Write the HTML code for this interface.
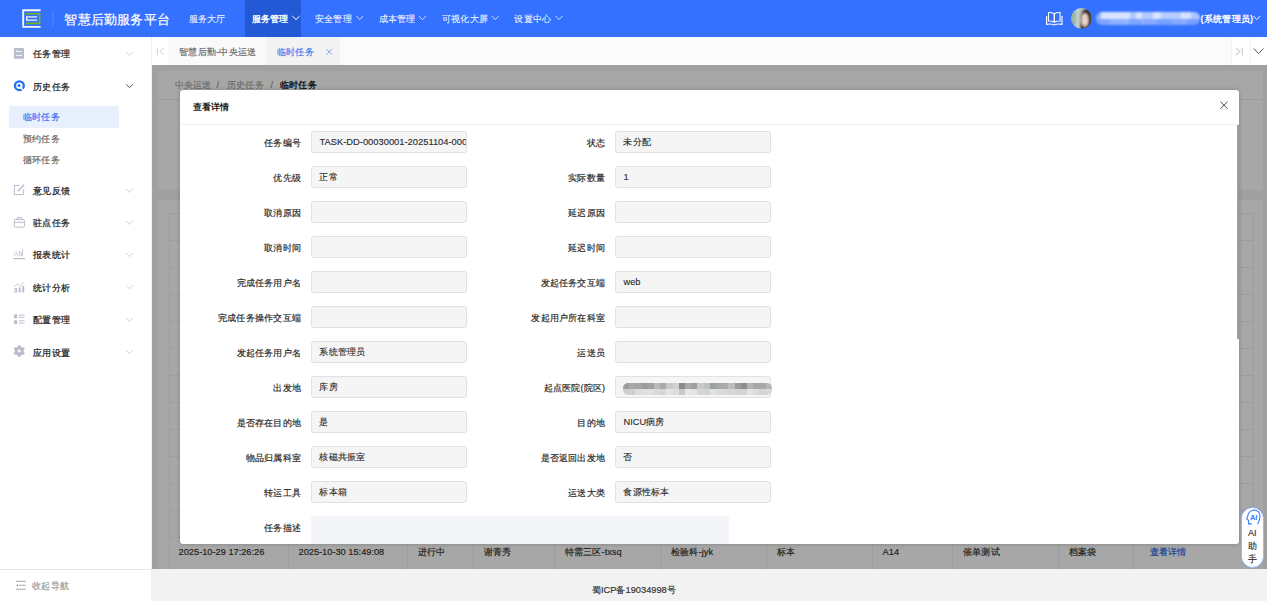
<!DOCTYPE html>
<html><head><meta charset="utf-8">
<style>
*{box-sizing:border-box;margin:0;padding:0}
html,body{width:1267px;height:601px;overflow:hidden;background:#fff;font-family:"Liberation Sans",sans-serif;color:#333}
.a{position:absolute;white-space:nowrap}
.t{font-size:9.24px;line-height:12px;letter-spacing:0.24px;-webkit-text-stroke:0.18px currentColor}
#hdr{position:absolute;left:0;top:0;width:1267px;height:37px;background:#3471ff}
#side{position:absolute;left:0;top:37px;width:152px;height:564px;background:#fff;border-right:0.7px solid #eee}
#tabs{position:absolute;left:152px;top:37px;width:1115px;height:27.5px;background:#fbfbfb}
#content{position:absolute;left:152px;top:64.5px;width:1115px;height:504.5px;background:#f4f4f4;overflow:hidden}
#footer{position:absolute;left:152px;top:569px;width:1115px;height:32px;background:#f2f2f2}
#overlay{position:absolute;left:152px;top:64.5px;width:1115px;height:504.5px;background:rgba(0,0,0,.345)}
#modal{position:absolute;left:179.6px;top:90.2px;width:1059.4px;height:453.4px;background:#fff;border-radius:3px;overflow:hidden;box-shadow:0 0 4px rgba(0,0,0,.22)}
.lbl{position:absolute;font-size:9.24px;line-height:12px;letter-spacing:0.24px;color:#2a2a2a;-webkit-text-stroke:0.18px currentColor;text-align:right;white-space:nowrap}
.inp{position:absolute;height:21.3px;width:156px;letter-spacing:0.24px;background:#f5f5f5;border:0.66px solid #dfe1e6;border-radius:2.6px;font-size:9.24px;line-height:21.6px;padding-left:7.5px;color:#2a2a2a;-webkit-text-stroke:0.12px currentColor;overflow:hidden;white-space:nowrap}
</style></head><body>
<div id="hdr">
<svg class="a" style="left:0;top:0" width="70" height="37" viewBox="0 0 70 37">
<path d="M40.6 10.2H23.2V26.9H40.6" fill="none" stroke="#f4f6ff" stroke-width="1.9"/>
<path d="M26 13.7H39.6V23.4H26" fill="none" stroke="#74b31d" stroke-width="1.6"/>
<path d="M37.1 16.9H26.7V20.1H37.1" fill="none" stroke="#f4f6ff" stroke-width="1.3"/>
<rect x="52.6" y="10.1" width="1" height="16" fill="#fff" opacity=".18"/>
</svg>
<div class="a" style="left:64.4px;top:11.5px;font-size:13.2px;line-height:16px;letter-spacing:0.2px;color:#fff;-webkit-text-stroke:0.2px #fff">智慧后勤服务平台</div>
<div class="a" style="left:244.9px;top:0;width:56.5px;height:37px;background:#2459d6"></div>
<div class="a t" style="left:188.5px;top:12.5px;color:rgba(255,255,255,.82)">服务大厅</div>
<div class="a t" style="left:251.7px;top:12.5px;color:#fff;font-weight:bold;-webkit-text-stroke:0">服务管理</div>
<div class="a t" style="left:315px;top:12.5px;color:rgba(255,255,255,.82)">安全管理</div>
<div class="a t" style="left:378.5px;top:12.5px;color:rgba(255,255,255,.82)">成本管理</div>
<div class="a t" style="left:442px;top:12.5px;color:rgba(255,255,255,.82)">可视化大屏</div>
<div class="a t" style="left:514.4px;top:12.5px;color:rgba(255,255,255,.82)">设置中心</div>
<svg class="a" style="left:0;top:0" width="1267" height="37">
<g fill="none" stroke-width="1" stroke-linecap="round">
<path d="M292.6 16.3L296 19.6L299.4 16.3" stroke="#fff"/>
<path d="M356.6 16.3L359.7 19.6L362.8 16.3" stroke="rgba(255,255,255,.75)"/>
<path d="M419.2 16.3L422.5 19.6L425.8 16.3" stroke="rgba(255,255,255,.75)"/>
<path d="M492 16.3L495.2 19.6L498.4 16.3" stroke="rgba(255,255,255,.75)"/>
<path d="M555.9 16.3L559 19.6L562.1 16.3" stroke="rgba(255,255,255,.75)"/>
<path d="M1253.7 16.3L1256.8 19.6L1259.9 16.3" stroke="#fff"/>
</g>
<g fill="none" stroke="#fff" stroke-width="1.1" stroke-linejoin="round">
<path d="M1054.3 22.3V13.8Q1052 12.3 1048.5 12.5V21Q1052 20.9 1054.3 22.3Z"/>
<path d="M1054.3 22.3V13.8Q1056.6 12.3 1060.1 12.5V21Q1056.6 20.9 1054.3 22.3Z"/>
<path d="M1046.6 16V24.4Q1050.7 23.4 1054.3 24.9Q1057.9 23.4 1062 24.4V16"/>
</g>
</svg>
<svg class="a" style="left:1068px;top:5px" width="28" height="27" viewBox="0 0 623 601">
<defs><clipPath id="av"><circle cx="300" cy="297" r="233"/></clipPath><filter id="avb"><feGaussianBlur stdDeviation="22"/></filter></defs>
<g clip-path="url(#av)"><g filter="url(#avb)">
<rect x="0" y="0" width="623" height="601" fill="#b3c6bd"/>
<rect x="60" y="150" width="120" height="300" fill="#98b5aa"/>
<rect x="180" y="60" width="80" height="480" fill="#c5d2cb"/>
<path d="M265 560 L285 230 Q320 70 430 80 Q540 110 540 300 L540 560Z" fill="#3a281e"/>
<ellipse cx="375" cy="335" rx="80" ry="150" fill="#eed8cc"/>
<ellipse cx="372" cy="428" rx="32" ry="16" fill="#dba09c"/><ellipse cx="335" cy="300" rx="18" ry="10" fill="#9c8076"/><ellipse cx="410" cy="300" rx="18" ry="10" fill="#9c8076"/>
</g></g>
</svg>
<div class="a" style="left:1096.4px;top:12px;width:104px;height:13px;filter:blur(0.9px);border-radius:6px;overflow:hidden"><div class="a" style="left:0.0px;top:0;width:5.0px;height:6.5px;background:rgba(228,236,255,0.55)"></div><div class="a" style="left:4.7px;top:0;width:29.3px;height:6.5px;background:rgba(228,236,255,0.95)"></div><div class="a" style="left:33.7px;top:0;width:5.9px;height:6.5px;background:rgba(228,236,255,0.70)"></div><div class="a" style="left:39.3px;top:0;width:6.8px;height:6.5px;background:rgba(228,236,255,0.95)"></div><div class="a" style="left:45.8px;top:0;width:11.5px;height:6.5px;background:rgba(228,236,255,0.72)"></div><div class="a" style="left:57.1px;top:0;width:7.8px;height:6.5px;background:rgba(228,236,255,0.95)"></div><div class="a" style="left:64.5px;top:0;width:20.9px;height:6.5px;background:rgba(228,236,255,0.75)"></div><div class="a" style="left:85.1px;top:0;width:9.7px;height:6.5px;background:rgba(228,236,255,0.92)"></div><div class="a" style="left:94.5px;top:0;width:9.7px;height:6.5px;background:rgba(228,236,255,0.70)"></div><div class="a" style="left:0.0px;top:6.5px;width:12.5px;height:6.5px;background:rgba(215,228,255,0.45)"></div><div class="a" style="left:12.2px;top:6.5px;width:19.0px;height:6.5px;background:rgba(215,228,255,0.55)"></div><div class="a" style="left:30.9px;top:6.5px;width:15.3px;height:6.5px;background:rgba(215,228,255,0.45)"></div><div class="a" style="left:45.8px;top:6.5px;width:15.3px;height:6.5px;background:rgba(215,228,255,0.50)"></div><div class="a" style="left:60.8px;top:6.5px;width:15.3px;height:6.5px;background:rgba(215,228,255,0.42)"></div><div class="a" style="left:75.8px;top:6.5px;width:15.3px;height:6.5px;background:rgba(215,228,255,0.50)"></div><div class="a" style="left:90.7px;top:6.5px;width:13.4px;height:6.5px;background:rgba(215,228,255,0.40)"></div></div>
<div class="a t" style="left:1200.6px;top:12.5px;color:#fff;font-weight:bold;-webkit-text-stroke:0">(系统管理员)</div>
</div>
<div id="side">
<svg class="a" style="left:0;top:-37px" width="152" height="601">
<rect x="13.9" y="48" width="10.1" height="10.7" rx="0.8" fill="#b8bccb"/>
<g stroke="#fff" stroke-width="0.9" fill="none"><path d="M16 51.4H22M16.3 51.4L17.3 50.5M16 55.3H22M21.7 55.3L20.7 56.2"/></g>
<circle cx="19.4" cy="85.7" r="4.4" fill="none" stroke="#1c71f5" stroke-width="2.3"/>
<circle cx="19" cy="85.6" r="1.5" fill="#1c71f5"/>
<path d="M20.3 87.2L23.6 90.5" stroke="#fff" stroke-width="1.3"/>
<g fill="none" stroke="#b8bccb" stroke-width="1">
<path d="M19.5 185.4H14.4V194.6H23.6V189.5"/>
<path d="M17.8 191.2L24.2 184.8" stroke-width="1.5"/>
<rect x="14.4" y="219.5" width="10" height="7.6" rx="0.8"/>
<path d="M17.3 219.5V217.6H21.5V219.5M14.4 222.3H24.4"/>
<path d="M13.2 258.6H25" stroke-width="1.2"/>
<path d="M14.6 256.2V254.5L16.4 252.2L18 256.2M19.6 256.2V251.2L21.4 253.5V256.2M22.6 256.2V249.4" stroke-width="0.8"/>
<path d="M14.5 286.5L17.2 283.8L19.7 286.4L23.6 282.4" stroke-width="0.8"/>
<rect x="15" y="288.6" width="1.6" height="3.5"/>
</g>
<g fill="#b8bccb">
<rect x="18.8" y="287.6" width="1.9" height="4.8"/>
<rect x="22.3" y="285.8" width="1.9" height="6.6"/>
<rect x="13.9" y="314.6" width="3.3" height="3.6" rx="0.6"/>
<rect x="13.9" y="320.3" width="3.3" height="3.6" rx="0.6"/>
<rect x="18.8" y="314.6" width="5.7" height="0.9"/><rect x="18.8" y="316.8" width="5.7" height="0.9"/>
<rect x="18.8" y="320.3" width="5.7" height="0.9"/><rect x="18.8" y="322.6" width="5.7" height="0.9"/>
<circle cx="19.2" cy="351" r="4.5"/><circle cx="19.20" cy="355.40" r="1.5"/><circle cx="15.39" cy="353.20" r="1.5"/><circle cx="15.39" cy="348.80" r="1.5"/><circle cx="19.20" cy="346.60" r="1.5"/><circle cx="23.01" cy="348.80" r="1.5"/><circle cx="23.01" cy="353.20" r="1.5"/>
</g>
<circle cx="19.2" cy="351" r="1.4" fill="#fff"/>
<g fill="none" stroke="#c0c4cc" stroke-width="0.8" stroke-linecap="round">
<path d="M126.4 52.2L129.5 55.2L132.6 52.2"/>
<path d="M126.4 189.3L129.5 192.3L132.6 189.3"/>
<path d="M126.4 221.3L129.5 224.3L132.6 221.3"/>
<path d="M126.4 253.5L129.5 256.5L132.6 253.5"/>
<path d="M126.4 285.7L129.5 288.7L132.6 285.7"/>
<path d="M126.4 318.2L129.5 321.2L132.6 318.2"/>
<path d="M126.4 350.6L129.5 353.6L132.6 350.6"/>
</g>
<path d="M126.4 84.6L129.5 87.6L132.6 84.6" fill="none" stroke="#444" stroke-width="0.9" stroke-linecap="round"/>
<g fill="#9a9ca5">
<rect x="16" y="580.8" width="9.8" height="0.9"/><rect x="19" y="584.8" width="6.8" height="0.9"/><rect x="16" y="588.8" width="9.8" height="0.9"/>
<path d="M16.2 585.25L18 583.8V586.7Z"/>
</g>
</svg>
<div class="a t" style="left:33.2px;top:10.8px;color:#222;-webkit-text-stroke:0.22px currentColor">任务管理</div>
<div class="a t" style="left:33.2px;top:44.2px;color:#222;-webkit-text-stroke:0.22px currentColor">历史任务</div>
<div class="a" style="left:9.3px;top:69px;width:109.5px;height:21.7px;background:#e8effd;border-radius:2px"></div>
<div class="a t" style="left:22.8px;top:74.2px;color:#3370f5">临时任务</div>
<div class="a t" style="left:22.8px;top:95.8px;color:#666">预约任务</div>
<div class="a t" style="left:22.8px;top:116.8px;color:#666">循环任务</div>
<div class="a t" style="left:33.2px;top:148.1px;color:#222;-webkit-text-stroke:0.22px currentColor">意见反馈</div>
<div class="a t" style="left:33.2px;top:180px;color:#222;-webkit-text-stroke:0.22px currentColor">驻点任务</div>
<div class="a t" style="left:33.2px;top:212.3px;color:#222;-webkit-text-stroke:0.22px currentColor">报表统计</div>
<div class="a t" style="left:33.2px;top:244.5px;color:#222;-webkit-text-stroke:0.22px currentColor">统计分析</div>
<div class="a t" style="left:33.2px;top:277.1px;color:#222;-webkit-text-stroke:0.22px currentColor">配置管理</div>
<div class="a t" style="left:33.2px;top:309.5px;color:#222;-webkit-text-stroke:0.22px currentColor">应用设置</div>
<div class="a" style="left:0;top:531.8px;width:152px;height:0.8px;background:#e6e6e6"></div>
<div class="a t" style="left:32.2px;top:542.7px;color:#999">收起导航</div>
</div>
<div id="tabs">
<div class="a" style="left:0;top:0;width:16px;height:27.5px;background:#fff"></div>
<div class="a" style="left:16px;top:0;width:98px;height:27.5px;background:#fafafa"></div>
<div class="a" style="left:114px;top:0;width:74.2px;height:27.5px;background:#f3f3f3"></div>
<div class="a" style="left:1078.8px;top:0;width:19.2px;height:27.5px;background:#fff;border-left:0.7px solid #f3f3f3"></div>
<div class="a" style="left:1098px;top:0;width:17px;height:27.5px;background:#fff;border-left:0.7px solid #f3f3f3"></div>
<svg class="a" style="left:-152px;top:-37px" width="1267" height="65">
<g fill="none" stroke-linecap="round">
<path d="M157.4 48.6V54.6M163.2 48.6L160.2 51.6L163.2 54.6" stroke="#c8c8c8" stroke-width="0.9"/>
<path d="M326.8 49.4L331.6 54.2M331.6 49.4L326.8 54.2" stroke="#6d9af5" stroke-width="0.9"/>
<path d="M1236.4 48.4L1239.7 51.6L1236.4 54.8" stroke="#d0d0d0" stroke-width="1.2"/>
<path d="M1242.3 48.2V55" stroke="#d8d8d8" stroke-width="1.4"/>
<path d="M1254 48.8L1258.6 53.6L1263.2 48.8" stroke="#555" stroke-width="1"/>
</g>
</svg>
<div class="a t" style="left:27.2px;top:8.8px;color:#666">智慧后勤-中央运送</div>
<div class="a t" style="left:125px;top:8.8px;color:#3a78f0">临时任务</div>
</div>
<div id="content">
<div class="a" style="left:6.2px;top:6.2px;width:1104.8px;height:119.3px;background:#fff"></div>
<div class="a" style="left:6.2px;top:34.5px;width:1104.8px;height:0.7px;background:#eee"></div>
<div class="a t" style="left:22.7px;top:14.3px;color:#a8a8a8">中央运送</div>
<div class="a t" style="left:64.5px;top:14.3px;color:#999">/</div>
<div class="a t" style="left:75.0px;top:14.3px;color:#a8a8a8">历史任务</div>
<div class="a t" style="left:118.5px;top:14.3px;color:#999">/</div>
<div class="a t" style="left:128.0px;top:14.3px;color:#222;font-weight:bold;-webkit-text-stroke:0">临时任务</div>
<div class="a" style="left:6.2px;top:135.5px;width:1104.8px;height:369px;background:#fff"></div>
<div class="a" style="left:16.7px;top:148.5px;width:0.7px;height:356px;background:#f0f0f0"></div>
<div class="a" style="left:136.0px;top:148.5px;width:0.7px;height:356px;background:#f0f0f0"></div>
<div class="a" style="left:255.4px;top:148.5px;width:0.7px;height:356px;background:#f0f0f0"></div>
<div class="a" style="left:321.4px;top:148.5px;width:0.7px;height:356px;background:#f0f0f0"></div>
<div class="a" style="left:401.7px;top:148.5px;width:0.7px;height:356px;background:#f0f0f0"></div>
<div class="a" style="left:508.0px;top:148.5px;width:0.7px;height:356px;background:#f0f0f0"></div>
<div class="a" style="left:614.0px;top:148.5px;width:0.7px;height:356px;background:#f0f0f0"></div>
<div class="a" style="left:720.3px;top:148.5px;width:0.7px;height:356px;background:#f0f0f0"></div>
<div class="a" style="left:800.0px;top:148.5px;width:0.7px;height:356px;background:#f0f0f0"></div>
<div class="a" style="left:906.0px;top:148.5px;width:0.7px;height:356px;background:#f0f0f0"></div>
<div class="a" style="left:981.0px;top:148.5px;width:0.7px;height:356px;background:#f0f0f0"></div>
<div class="a" style="left:1101.0px;top:148.5px;width:0.7px;height:356px;background:#f0f0f0"></div>
<div class="a" style="left:16.7px;top:148.5px;width:1084.3px;height:0.7px;background:#f0f0f0"></div>
<div class="a" style="left:16.7px;top:175.5px;width:1084.3px;height:0.7px;background:#f0f0f0"></div>
<div class="a" style="left:16.7px;top:202.5px;width:1084.3px;height:0.7px;background:#f0f0f0"></div>
<div class="a" style="left:16.7px;top:229.5px;width:1084.3px;height:0.7px;background:#f0f0f0"></div>
<div class="a" style="left:16.7px;top:256.5px;width:1084.3px;height:0.7px;background:#f0f0f0"></div>
<div class="a" style="left:16.7px;top:283.5px;width:1084.3px;height:0.7px;background:#f0f0f0"></div>
<div class="a" style="left:16.7px;top:310.5px;width:1084.3px;height:0.7px;background:#f0f0f0"></div>
<div class="a" style="left:16.7px;top:337.5px;width:1084.3px;height:0.7px;background:#f0f0f0"></div>
<div class="a" style="left:16.7px;top:364.5px;width:1084.3px;height:0.7px;background:#f0f0f0"></div>
<div class="a" style="left:16.7px;top:391.5px;width:1084.3px;height:0.7px;background:#f0f0f0"></div>
<div class="a" style="left:16.7px;top:418.5px;width:1084.3px;height:0.7px;background:#f0f0f0"></div>
<div class="a" style="left:16.7px;top:445.5px;width:1084.3px;height:0.7px;background:#f0f0f0"></div>
<div class="a" style="left:16.7px;top:472.5px;width:1084.3px;height:0.7px;background:#f0f0f0"></div>
<div class="a t" style="left:26.6px;top:481px;color:#333"><span style="letter-spacing:0">2025-10-29 17:26:26</span></div>
<div class="a t" style="left:146.5px;top:481px;color:#333"><span style="letter-spacing:0">2025-10-30 15:49:08</span></div>
<div class="a t" style="left:266.0px;top:481px;color:#333">进行中</div>
<div class="a t" style="left:332.0px;top:481px;color:#333">谢青秀</div>
<div class="a t" style="left:412.6px;top:481px;color:#333">特需三区<span style="letter-spacing:0">-txsq</span></div>
<div class="a t" style="left:519.0px;top:481px;color:#333">检验科<span style="letter-spacing:0">-jyk</span></div>
<div class="a t" style="left:625.0px;top:481px;color:#333">标本</div>
<div class="a t" style="left:730.6px;top:481px;color:#333"><span style="letter-spacing:0">A14</span></div>
<div class="a t" style="left:811.0px;top:481px;color:#333">催单测试</div>
<div class="a t" style="left:917.0px;top:481px;color:#333">档案袋</div>
<div class="a t" style="left:997.7px;top:481px;color:#2c64e0">查看详情</div>
</div>
<div id="overlay"></div>
<div id="footer"><div class="a t" style="left:439.7px;top:15px;color:#333">蜀<span style="letter-spacing:0">ICP</span>备<span style="letter-spacing:0">19034998</span>号</div></div>
<div id="modal">
<div class="a" style="left:13.4px;top:11.3px;font-size:9.24px;line-height:12px;font-weight:bold;color:#222">查看详情</div>
<svg class="a" style="left:0;top:0" width="1060" height="40"><path d="M1040.4 11.6L1047.6 18.8M1047.6 11.6L1040.4 18.8" stroke="#3a3a44" stroke-width="0.95" fill="none"/></svg>
<div class="a" style="left:0;top:34.3px;width:1059.4px;height:0.7px;background:#f0f0f0"></div>
<div class="a" style="left:1057.8px;top:35px;width:1.6px;height:213.6px;background:#9e9e9e"></div>
<div class="lbl" style="right:937.8px;top:46.9px">任务编号</div>
<div class="inp" style="left:131.4px;top:41.1px"><span style="font-size:9.36px;letter-spacing:0">TASK-DD-00030001-20251104-00000</span></div>
<div class="lbl" style="right:633.8px;top:46.9px">状态</div>
<div class="inp" style="left:435.4px;top:41.1px">未分配</div>
<div class="lbl" style="right:937.8px;top:81.9px">优先级</div>
<div class="inp" style="left:131.4px;top:76.1px">正常</div>
<div class="lbl" style="right:633.8px;top:81.9px">实际数量</div>
<div class="inp" style="left:435.4px;top:76.1px"><span style="letter-spacing:0">1</span></div>
<div class="lbl" style="right:937.8px;top:116.9px">取消原因</div>
<div class="inp" style="left:131.4px;top:111.1px"></div>
<div class="lbl" style="right:633.8px;top:116.9px">延迟原因</div>
<div class="inp" style="left:435.4px;top:111.1px"></div>
<div class="lbl" style="right:937.8px;top:151.9px">取消时间</div>
<div class="inp" style="left:131.4px;top:146.1px"></div>
<div class="lbl" style="right:633.8px;top:151.9px">延迟时间</div>
<div class="inp" style="left:435.4px;top:146.1px"></div>
<div class="lbl" style="right:937.8px;top:186.9px">完成任务用户名</div>
<div class="inp" style="left:131.4px;top:181.1px"></div>
<div class="lbl" style="right:633.8px;top:186.9px">发起任务交互端</div>
<div class="inp" style="left:435.4px;top:181.1px"><span style="letter-spacing:0">web</span></div>
<div class="lbl" style="right:937.8px;top:221.9px">完成任务操作交互端</div>
<div class="inp" style="left:131.4px;top:216.1px"></div>
<div class="lbl" style="right:633.8px;top:221.9px">发起用户所在科室</div>
<div class="inp" style="left:435.4px;top:216.1px"></div>
<div class="lbl" style="right:937.8px;top:256.9px">发起任务用户名</div>
<div class="inp" style="left:131.4px;top:251.1px">系统管理员</div>
<div class="lbl" style="right:633.8px;top:256.9px">运送员</div>
<div class="inp" style="left:435.4px;top:251.1px"></div>
<div class="lbl" style="right:937.8px;top:291.9px">出发地</div>
<div class="inp" style="left:131.4px;top:286.1px">库房</div>
<div class="lbl" style="right:633.8px;top:291.9px">起点医院<span style="letter-spacing:0">(</span>院区<span style="letter-spacing:0">)</span></div>
<div class="inp" style="left:435.4px;top:286.1px;overflow:visible"><div class="a" style="left:7px;top:5.8px;width:149px;height:11.6px;overflow:hidden;border-radius:5px;filter:blur(0.5px)"><div class="a" style="left:0.0px;top:0;width:6.3px;height:5.8px;background:#9e9e9e"></div><div class="a" style="left:0.0px;top:5.8px;width:6.3px;height:5.8px;background:#cfcfcf"></div><div class="a" style="left:6.2px;top:0;width:6.3px;height:5.8px;background:#a8a8a8"></div><div class="a" style="left:6.2px;top:5.8px;width:6.3px;height:5.8px;background:#d0d0d0"></div><div class="a" style="left:12.4px;top:0;width:6.3px;height:5.8px;background:#a5a5a5"></div><div class="a" style="left:12.4px;top:5.8px;width:6.3px;height:5.8px;background:#dcdcdc"></div><div class="a" style="left:18.6px;top:0;width:6.3px;height:5.8px;background:#9a9a9a"></div><div class="a" style="left:18.6px;top:5.8px;width:6.3px;height:5.8px;background:#e0e0e0"></div><div class="a" style="left:24.8px;top:0;width:6.3px;height:5.8px;background:#a0a0a6"></div><div class="a" style="left:24.8px;top:5.8px;width:6.3px;height:5.8px;background:#e0e0e0"></div><div class="a" style="left:31.0px;top:0;width:6.3px;height:5.8px;background:#b9b9b9"></div><div class="a" style="left:31.0px;top:5.8px;width:6.3px;height:5.8px;background:#dadada"></div><div class="a" style="left:37.2px;top:0;width:6.3px;height:5.8px;background:#a9a9a9"></div><div class="a" style="left:37.2px;top:5.8px;width:6.3px;height:5.8px;background:#d5d5d5"></div><div class="a" style="left:43.4px;top:0;width:6.3px;height:5.8px;background:#c8c8c8"></div><div class="a" style="left:43.4px;top:5.8px;width:6.3px;height:5.8px;background:#e3e3e3"></div><div class="a" style="left:49.6px;top:0;width:6.3px;height:5.8px;background:#d2d2d2"></div><div class="a" style="left:49.6px;top:5.8px;width:6.3px;height:5.8px;background:#dedede"></div><div class="a" style="left:55.8px;top:0;width:6.3px;height:5.8px;background:#8f8a85"></div><div class="a" style="left:55.8px;top:5.8px;width:6.3px;height:5.8px;background:#c9c9c9"></div><div class="a" style="left:62.0px;top:0;width:6.3px;height:5.8px;background:#a6acae"></div><div class="a" style="left:62.0px;top:5.8px;width:6.3px;height:5.8px;background:#e6e6e6"></div><div class="a" style="left:68.2px;top:0;width:6.3px;height:5.8px;background:#9e9e9e"></div><div class="a" style="left:68.2px;top:5.8px;width:6.3px;height:5.8px;background:#e3e3e3"></div><div class="a" style="left:74.4px;top:0;width:6.3px;height:5.8px;background:#c8c8c8"></div><div class="a" style="left:74.4px;top:5.8px;width:6.3px;height:5.8px;background:#d6d6d6"></div><div class="a" style="left:80.6px;top:0;width:6.3px;height:5.8px;background:#c0c0c0"></div><div class="a" style="left:80.6px;top:5.8px;width:6.3px;height:5.8px;background:#d0d6d8"></div><div class="a" style="left:86.8px;top:0;width:6.3px;height:5.8px;background:#9aa0a4"></div><div class="a" style="left:86.8px;top:5.8px;width:6.3px;height:5.8px;background:#e2e2e2"></div><div class="a" style="left:93.0px;top:0;width:6.3px;height:5.8px;background:#a8a8a8"></div><div class="a" style="left:93.0px;top:5.8px;width:6.3px;height:5.8px;background:#dcdcdc"></div><div class="a" style="left:99.2px;top:0;width:6.3px;height:5.8px;background:#a9aba9"></div><div class="a" style="left:99.2px;top:5.8px;width:6.3px;height:5.8px;background:#d8d8d8"></div><div class="a" style="left:105.4px;top:0;width:6.3px;height:5.8px;background:#bdbdbd"></div><div class="a" style="left:105.4px;top:5.8px;width:6.3px;height:5.8px;background:#d8d8d8"></div><div class="a" style="left:111.6px;top:0;width:6.3px;height:5.8px;background:#9c9c9c"></div><div class="a" style="left:111.6px;top:5.8px;width:6.3px;height:5.8px;background:#d4d4d4"></div><div class="a" style="left:117.8px;top:0;width:6.3px;height:5.8px;background:#8e8e90"></div><div class="a" style="left:117.8px;top:5.8px;width:6.3px;height:5.8px;background:#cfd4d6"></div><div class="a" style="left:124.0px;top:0;width:6.3px;height:5.8px;background:#b3b3b3"></div><div class="a" style="left:124.0px;top:5.8px;width:6.3px;height:5.8px;background:#e4e4e4"></div><div class="a" style="left:130.2px;top:0;width:6.3px;height:5.8px;background:#a6a6aa"></div><div class="a" style="left:130.2px;top:5.8px;width:6.3px;height:5.8px;background:#dcdcdc"></div><div class="a" style="left:136.4px;top:0;width:6.3px;height:5.8px;background:#a8a8a8"></div><div class="a" style="left:136.4px;top:5.8px;width:6.3px;height:5.8px;background:#d4d4d4"></div><div class="a" style="left:142.6px;top:0;width:6.3px;height:5.8px;background:#bab6b2"></div><div class="a" style="left:142.6px;top:5.8px;width:6.3px;height:5.8px;background:#d8d8d8"></div></div></div>
<div class="lbl" style="right:937.8px;top:326.9px">是否存在目的地</div>
<div class="inp" style="left:131.4px;top:321.1px">是</div>
<div class="lbl" style="right:633.8px;top:326.9px">目的地</div>
<div class="inp" style="left:435.4px;top:321.1px"><span style="letter-spacing:0">NICU</span>病房</div>
<div class="lbl" style="right:937.8px;top:361.9px">物品归属科室</div>
<div class="inp" style="left:131.4px;top:356.1px">核磁共振室</div>
<div class="lbl" style="right:633.8px;top:361.9px">是否返回出发地</div>
<div class="inp" style="left:435.4px;top:356.1px">否</div>
<div class="lbl" style="right:937.8px;top:396.9px">转运工具</div>
<div class="inp" style="left:131.4px;top:391.1px">标本箱</div>
<div class="lbl" style="right:633.8px;top:396.9px">运送大类</div>
<div class="inp" style="left:435.4px;top:391.1px">食源性标本</div>
<div class="lbl" style="right:937.8px;top:431.9px">任务描述</div>
<div class="a" style="left:131.4px;top:426.1px;width:418px;height:60px;background:#f4f5f8;border-radius:2.6px"></div>
</div>
<div class="a" style="left:1240.7px;top:506.8px;width:23.2px;height:61.4px;border-radius:11.6px;background:#fff;border:0.8px solid #9dbaf2;box-shadow:0 0 1.2px rgba(60,110,230,.3)"></div>
<svg class="a" style="left:1238px;top:503px" width="28" height="27">
<path d="M13.5 20.9H10.6V17.5L8.6 15.7L9.7 13.5Q10 8.2 15.7 7Q21.8 7.2 22 13Q22 16.5 19.8 20.7" fill="none" stroke="#3b7bf5" stroke-width="1.1" stroke-linejoin="round" stroke-linecap="round"/>
<text x="12" y="16.7" font-size="7.6" font-weight="bold" fill="#3b7bf5" font-family="Liberation Sans" letter-spacing="-0.3">AI</text>
</svg>
<div class="a" style="left:1240.7px;top:527px;width:23.2px;text-align:center;font-size:9.24px;line-height:13px;color:#333;white-space:normal;-webkit-text-stroke:0.15px #333">AI<br>助<br>手</div>
</body></html>
